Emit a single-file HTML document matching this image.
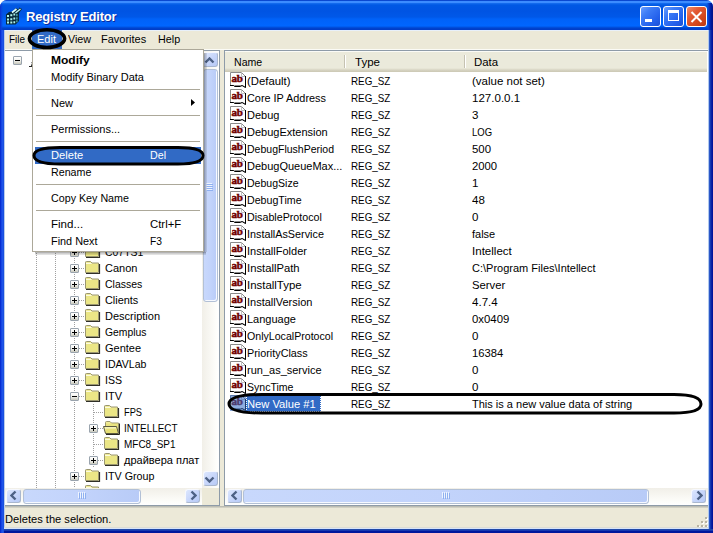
<!DOCTYPE html><html><head><meta charset="utf-8"><style>
*{margin:0;padding:0;box-sizing:border-box}
html,body{width:713px;height:533px;overflow:hidden;background:#fff}
body{position:relative;font-family:"Liberation Sans",sans-serif;font-size:11px;color:#000}
.abs{position:absolute}
#frame{position:absolute;left:0;top:0;width:713px;height:533px;background:#0a3fd6;border-radius:7px 7px 0 0;overflow:hidden}
#lb{z-index:5;position:absolute;left:0;top:30px;width:5px;height:503px;background:linear-gradient(90deg,#0428cc 0,#0a34d8 1px,#2258f0 2px,#1a50e0 3px,#1a50e0 4px,#b8cceb 4px,#b8cceb 5px)}
#rb{z-index:6;position:absolute;left:708px;top:30px;width:5px;height:499px;background:linear-gradient(90deg,#b0c8ee 0,#b0c8ee 1px,#2a58c8 1px,#2a58c8 2px,#1438b0 2px,#1438b0 3px,#0a22a2 3px,#0a22a2 4px,#00139a 4px)}
#bb{z-index:5;position:absolute;left:4px;top:527px;width:709px;height:6px;background:linear-gradient(180deg,#dcdcd4 0,#dcdcd4 1px,#d8e4f8 1px,#d8e4f8 2px,#2048a8 2px,#2048a8 3px,#1538b0 3px,#1538b0 4px,#00169c 4px)}
#title{position:absolute;left:0;top:0;width:713px;height:31px;border-radius:7px 7px 0 0;
 background:linear-gradient(180deg,#0a48d0 0,#0a48d0 1px,#3c8cff 1px,#3c8cff 3px,#1870f0 3px,#0058e4 5px,#0054e3 11px,#0058e8 17px,#0062f8 19px,#0066ff 26px,#0054e4 27px,#0046d0 28px,#003dc8 29px,#003dc8 30px,#e8f0fa 30px)}
#ttext{position:absolute;left:26px;top:7px;font-weight:bold;font-size:13px;line-height:20px;color:#fff;text-shadow:1px 1px 0 #0a2a9c;letter-spacing:-0.18px}
.tbtn{position:absolute;top:6px;width:21px;height:21px;border:1px solid #fff;border-radius:3px}
.tblue{background:linear-gradient(135deg,#6a9eff 0%,#3d7cf6 30%,#2461ec 70%,#1b50d6 100%)}
#menubar{position:absolute;left:4px;top:31px;width:705px;height:18px;background:#ece9d8}
.mi{position:absolute;top:29px;line-height:20px;height:20px}
#client{position:absolute;left:4px;top:50px;width:704px;height:478px;background:#ece9d8}
.pane{position:absolute;background:#fff;border:1px solid #8e9ba8;overflow:hidden}
.tr{position:absolute;white-space:nowrap;line-height:16px;height:16px}
.exp{position:absolute;width:9px;height:9px;border:1px solid #9aa4ae;border-radius:1px;background:linear-gradient(180deg,#fff 0,#f2f2ee 50%,#c8c8bc 100%)}
.exp:before{content:"";position:absolute;left:1px;top:3px;width:5px;height:1px;background:#000}
.exp.plus:after{content:"";position:absolute;left:3px;top:1px;width:1px;height:5px;background:#000}
.vd{position:absolute;width:1px;background:repeating-linear-gradient(180deg,#a0a0a0 0,#a0a0a0 1px,transparent 1px,transparent 2px)}
.hd{position:absolute;height:1px;background:repeating-linear-gradient(90deg,#a0a0a0 0,#a0a0a0 1px,transparent 1px,transparent 2px)}
.fold{position:absolute;width:16px;height:14px}
.row{position:absolute;left:0;height:17px;line-height:17px;white-space:nowrap}
.sbtn{position:absolute;width:15px;height:15px;border:1px solid;border-color:#f6f8fe #a9b7cf #a9b7cf #f6f8fe;border-radius:3px;background:linear-gradient(135deg,#dde7fe 0%,#cad8fb 45%,#b6c9f6 100%)}
.thumb{position:absolute;border:1px solid #b2c0d6;border-radius:3px;background:linear-gradient(90deg,#c8d8fc,#c2d3fb 50%,#b8cbf7);box-shadow:inset -1px -1px 0 #f6f9ff}
.grip{position:absolute;background:#8fb0f0;box-shadow:-1px -1px 0 #eef4fe}
.mrow{position:absolute;left:1px;width:170px;height:17px;line-height:16px;white-space:nowrap}
.msep{position:absolute;left:3px;width:164px;height:1px;background:#aca899}
</style></head><body>
<div id="frame">
<div id="title"></div>
<div id="lb"></div><div id="rb"></div><div id="bb"></div>
<div class="abs" style="left:0;top:4px;width:3px;height:26px;background:linear-gradient(90deg,#0830c8,#0a40dc 1px,rgba(10,70,230,0) 3px)"></div>
<div class="abs" style="left:707px;top:3px;width:6px;height:27px;background:linear-gradient(90deg,rgba(0,80,230,0) 0,#0a48d8 1px,#0836c0 2px,#0028b0 3px,#001ea0 4px,#00148c 5px)"></div>
<svg class="abs" style="left:0;top:0" width="26" height="28" viewBox="0 0 26 28">
<path d="M6 14.5 L9 12 L13 11.5 L16 8 L18.5 9.5 L19.5 7.5 L22 9 L19 13 L19 21 L15.5 24.5 L6 24.5 Z" fill="#062838"/>
<g fill="#b0f2ec"><path d="M7 15 h2 v2 h-2z M10.3 14.3 h2 v2 h-2z M13.4 13.6 h1.8 v2 h-1.8z M7 18.4 h2 v2 h-2z M10.3 18.2 h2 v2 h-2z M13.4 17.6 h1.8 v2 h-1.8z M7 21.6 h2 v2 h-2z M10.3 21.6 h2 v2 h-2z M13.4 21.2 h1.8 v2 h-1.8z"/>
<path d="M16.3 14 h1.2 v2.3 h-1.2z M16.3 17.2 h1.2 v2.3 h-1.2z M16.3 20.3 h1.2 v2 h-1.2z" fill="#5ab8c0"/></g>
<path d="M12 12.5 L16.5 9" stroke="#e0fffc" stroke-width="1.6"/><path d="M15.5 13 L20.5 9" stroke="#c0f4f0" stroke-width="1.4"/>
</svg>
<div id="ttext">Registry Editor</div>
<div class="tbtn tblue" style="left:640px"><div class="abs" style="left:4px;top:12px;width:7px;height:3px;background:#fff"></div></div>
<div class="tbtn tblue" style="left:663px"><div class="abs" style="left:4px;top:3px;width:11px;height:11px;border:1px solid #fff;border-top-width:3px"></div></div>
<div class="tbtn" style="left:686px;background:linear-gradient(135deg,#f08c6a 0%,#e35a35 35%,#d04418 75%,#b83a12 100%)"><svg class="abs" style="left:3px;top:4px" width="13" height="12"><path d="M1.5 1 L11.5 11 M11.5 1 L1.5 11" stroke="#fff" stroke-width="2"/></svg></div>
<div id="menubar"></div><div class="abs" style="left:4px;top:49px;width:705px;height:1px;background:#fbfbf6"></div>
<div class="abs" style="left:32px;top:30px;width:30px;height:19px;background:#316ac5"></div>
<div class="mi" style="left:9px;color:#000;transform:scaleX(0.9036);transform-origin:0 0;">File</div>
<div class="mi" style="left:37px;color:#fff;">Edit</div>
<div class="mi" style="left:68px;color:#000;transform:scaleX(0.9778);transform-origin:0 0;">View</div>
<div class="mi" style="left:101px;color:#000;">Favorites</div>
<div class="mi" style="left:158px;color:#000;transform:scaleX(0.9775);transform-origin:0 0;">Help</div>
<div id="client"></div>
<div class="pane" style="left:4px;top:50px;width:216px;height:456px">
<div class="vd" style="left:31px;top:0;height:440px"></div>
<div class="vd" style="left:50px;top:0;height:440px"></div>
<div class="vd" style="left:69px;top:139px;height:300px"></div>
<div class="vd" style="left:88px;top:353px;height:64px"></div>
<div class="exp" style="left:8px;top:5px"></div>
<svg class="abs" style="left:23px;top:10px" width="5" height="7"><path d="M1 5.5 H4.5 M3.5 5 L4.5 2.5" stroke="#222" stroke-width="1.2" fill="none"/><rect x="3" y="1" width="2" height="1" fill="#999"/></svg>
<div class="hd" style="left:74px;top:201px;width:5px"></div>
<div class="exp plus" style="left:65px;top:197px"></div>
<svg class="fold" style="left:80px;top:194px" width="16" height="14" viewBox="0 0 16 14"><path d="M1 12.5 H14.5 V3" fill="none" stroke="#303028" stroke-width="1.2"/><path d="M0.5 11.5 V1.2 Q0.5 0.5 1.5 0.5 H5.5 L7 2 H13.5 V11.5 Z" fill="#f0eb98" stroke="#9a9670"/><rect x="1" y="3" width="12" height="8" fill="#e2da5c" opacity="0.3"/><path d="M1 2.5 H6.5" stroke="#fbfbe0"/></svg>
<div class="tr" style="left:100px;top:193px;transform:scaleX(0.9503);transform-origin:0 0;">C07TS1</div>
<div class="hd" style="left:74px;top:217px;width:5px"></div>
<div class="exp plus" style="left:65px;top:213px"></div>
<svg class="fold" style="left:80px;top:210px" width="16" height="14" viewBox="0 0 16 14"><path d="M1 12.5 H14.5 V3" fill="none" stroke="#303028" stroke-width="1.2"/><path d="M0.5 11.5 V1.2 Q0.5 0.5 1.5 0.5 H5.5 L7 2 H13.5 V11.5 Z" fill="#f0eb98" stroke="#9a9670"/><rect x="1" y="3" width="12" height="8" fill="#e2da5c" opacity="0.3"/><path d="M1 2.5 H6.5" stroke="#fbfbe0"/></svg>
<div class="tr" style="left:100px;top:209px;">Canon</div>
<div class="hd" style="left:74px;top:233px;width:5px"></div>
<div class="exp plus" style="left:65px;top:229px"></div>
<svg class="fold" style="left:80px;top:226px" width="16" height="14" viewBox="0 0 16 14"><path d="M1 12.5 H14.5 V3" fill="none" stroke="#303028" stroke-width="1.2"/><path d="M0.5 11.5 V1.2 Q0.5 0.5 1.5 0.5 H5.5 L7 2 H13.5 V11.5 Z" fill="#f0eb98" stroke="#9a9670"/><rect x="1" y="3" width="12" height="8" fill="#e2da5c" opacity="0.3"/><path d="M1 2.5 H6.5" stroke="#fbfbe0"/></svg>
<div class="tr" style="left:100px;top:225px;transform:scaleX(0.9544);transform-origin:0 0;">Classes</div>
<div class="hd" style="left:74px;top:249px;width:5px"></div>
<div class="exp plus" style="left:65px;top:245px"></div>
<svg class="fold" style="left:80px;top:242px" width="16" height="14" viewBox="0 0 16 14"><path d="M1 12.5 H14.5 V3" fill="none" stroke="#303028" stroke-width="1.2"/><path d="M0.5 11.5 V1.2 Q0.5 0.5 1.5 0.5 H5.5 L7 2 H13.5 V11.5 Z" fill="#f0eb98" stroke="#9a9670"/><rect x="1" y="3" width="12" height="8" fill="#e2da5c" opacity="0.3"/><path d="M1 2.5 H6.5" stroke="#fbfbe0"/></svg>
<div class="tr" style="left:100px;top:241px;transform:scaleX(0.9897);transform-origin:0 0;">Clients</div>
<div class="hd" style="left:74px;top:265px;width:5px"></div>
<div class="exp plus" style="left:65px;top:261px"></div>
<svg class="fold" style="left:80px;top:258px" width="16" height="14" viewBox="0 0 16 14"><path d="M1 12.5 H14.5 V3" fill="none" stroke="#303028" stroke-width="1.2"/><path d="M0.5 11.5 V1.2 Q0.5 0.5 1.5 0.5 H5.5 L7 2 H13.5 V11.5 Z" fill="#f0eb98" stroke="#9a9670"/><rect x="1" y="3" width="12" height="8" fill="#e2da5c" opacity="0.3"/><path d="M1 2.5 H6.5" stroke="#fbfbe0"/></svg>
<div class="tr" style="left:100px;top:257px;">Description</div>
<div class="hd" style="left:74px;top:281px;width:5px"></div>
<div class="exp plus" style="left:65px;top:277px"></div>
<svg class="fold" style="left:80px;top:274px" width="16" height="14" viewBox="0 0 16 14"><path d="M1 12.5 H14.5 V3" fill="none" stroke="#303028" stroke-width="1.2"/><path d="M0.5 11.5 V1.2 Q0.5 0.5 1.5 0.5 H5.5 L7 2 H13.5 V11.5 Z" fill="#f0eb98" stroke="#9a9670"/><rect x="1" y="3" width="12" height="8" fill="#e2da5c" opacity="0.3"/><path d="M1 2.5 H6.5" stroke="#fbfbe0"/></svg>
<div class="tr" style="left:100px;top:273px;transform:scaleX(0.9402);transform-origin:0 0;">Gemplus</div>
<div class="hd" style="left:74px;top:297px;width:5px"></div>
<div class="exp plus" style="left:65px;top:293px"></div>
<svg class="fold" style="left:80px;top:290px" width="16" height="14" viewBox="0 0 16 14"><path d="M1 12.5 H14.5 V3" fill="none" stroke="#303028" stroke-width="1.2"/><path d="M0.5 11.5 V1.2 Q0.5 0.5 1.5 0.5 H5.5 L7 2 H13.5 V11.5 Z" fill="#f0eb98" stroke="#9a9670"/><rect x="1" y="3" width="12" height="8" fill="#e2da5c" opacity="0.3"/><path d="M1 2.5 H6.5" stroke="#fbfbe0"/></svg>
<div class="tr" style="left:100px;top:289px;">Gentee</div>
<div class="hd" style="left:74px;top:313px;width:5px"></div>
<div class="exp plus" style="left:65px;top:309px"></div>
<svg class="fold" style="left:80px;top:306px" width="16" height="14" viewBox="0 0 16 14"><path d="M1 12.5 H14.5 V3" fill="none" stroke="#303028" stroke-width="1.2"/><path d="M0.5 11.5 V1.2 Q0.5 0.5 1.5 0.5 H5.5 L7 2 H13.5 V11.5 Z" fill="#f0eb98" stroke="#9a9670"/><rect x="1" y="3" width="12" height="8" fill="#e2da5c" opacity="0.3"/><path d="M1 2.5 H6.5" stroke="#fbfbe0"/></svg>
<div class="tr" style="left:100px;top:305px;transform:scaleX(0.9579);transform-origin:0 0;">IDAVLab</div>
<div class="hd" style="left:74px;top:329px;width:5px"></div>
<div class="exp plus" style="left:65px;top:325px"></div>
<svg class="fold" style="left:80px;top:322px" width="16" height="14" viewBox="0 0 16 14"><path d="M1 12.5 H14.5 V3" fill="none" stroke="#303028" stroke-width="1.2"/><path d="M0.5 11.5 V1.2 Q0.5 0.5 1.5 0.5 H5.5 L7 2 H13.5 V11.5 Z" fill="#f0eb98" stroke="#9a9670"/><rect x="1" y="3" width="12" height="8" fill="#e2da5c" opacity="0.3"/><path d="M1 2.5 H6.5" stroke="#fbfbe0"/></svg>
<div class="tr" style="left:100px;top:321px;transform:scaleX(0.9608);transform-origin:0 0;">ISS</div>
<div class="hd" style="left:74px;top:345px;width:5px"></div>
<div class="exp" style="left:65px;top:341px"></div>
<svg class="fold" style="left:80px;top:338px" width="16" height="14" viewBox="0 0 16 14"><path d="M1 12.5 H14.5 V3" fill="none" stroke="#303028" stroke-width="1.2"/><path d="M0.5 11.5 V1.2 Q0.5 0.5 1.5 0.5 H5.5 L7 2 H13.5 V11.5 Z" fill="#f0eb98" stroke="#9a9670"/><rect x="1" y="3" width="12" height="8" fill="#e2da5c" opacity="0.3"/><path d="M1 2.5 H6.5" stroke="#fbfbe0"/></svg>
<div class="tr" style="left:100px;top:337px;">ITV</div>
<div class="hd" style="left:89px;top:361px;width:9px"></div>
<svg class="fold" style="left:99px;top:354px" width="16" height="14" viewBox="0 0 16 14"><path d="M1 12.5 H14.5 V3" fill="none" stroke="#303028" stroke-width="1.2"/><path d="M0.5 11.5 V1.2 Q0.5 0.5 1.5 0.5 H5.5 L7 2 H13.5 V11.5 Z" fill="#f0eb98" stroke="#9a9670"/><rect x="1" y="3" width="12" height="8" fill="#e2da5c" opacity="0.3"/><path d="M1 2.5 H6.5" stroke="#fbfbe0"/></svg>
<div class="tr" style="left:119px;top:353px;transform:scaleX(0.8434);transform-origin:0 0;">FPS</div>
<div class="hd" style="left:93px;top:377px;width:5px"></div>
<div class="exp plus" style="left:84px;top:373px"></div>
<svg class="abs" style="left:98px;top:370px" width="17" height="15" viewBox="0 0 17 15"><path d="M2.5 12 V1.5 Q2.5 0.5 3.5 0.5 H7 L8.5 2 H15.5 V12" fill="#f0eb98" stroke="#9a9670"/><rect x="3" y="2.5" width="12" height="4" fill="#e2da5c" opacity="0.4"/><path d="M16.5 2.5 V13.5 M3 13.5 H16.5" stroke="#262620"/><path d="M0.5 5.5 H13.5 L15.5 12.5 H2.5 Z" fill="#ece68c" stroke="#5c5a40"/><path d="M2 7 H13" stroke="#fbfbe0"/><rect x="3" y="7.5" width="11" height="4.5" fill="#e2da5c" opacity="0.45"/></svg>
<div class="tr" style="left:119px;top:369px;transform:scaleX(0.9036);transform-origin:0 0;">INTELLECT</div>
<div class="hd" style="left:89px;top:393px;width:9px"></div>
<svg class="fold" style="left:99px;top:386px" width="16" height="14" viewBox="0 0 16 14"><path d="M1 12.5 H14.5 V3" fill="none" stroke="#303028" stroke-width="1.2"/><path d="M0.5 11.5 V1.2 Q0.5 0.5 1.5 0.5 H5.5 L7 2 H13.5 V11.5 Z" fill="#f0eb98" stroke="#9a9670"/><rect x="1" y="3" width="12" height="8" fill="#e2da5c" opacity="0.3"/><path d="M1 2.5 H6.5" stroke="#fbfbe0"/></svg>
<div class="tr" style="left:119px;top:385px;transform:scaleX(0.9066);transform-origin:0 0;">MFC8_SP1</div>
<div class="hd" style="left:93px;top:409px;width:5px"></div>
<div class="exp plus" style="left:84px;top:405px"></div>
<svg class="fold" style="left:99px;top:402px" width="16" height="14" viewBox="0 0 16 14"><path d="M1 12.5 H14.5 V3" fill="none" stroke="#303028" stroke-width="1.2"/><path d="M0.5 11.5 V1.2 Q0.5 0.5 1.5 0.5 H5.5 L7 2 H13.5 V11.5 Z" fill="#f0eb98" stroke="#9a9670"/><rect x="1" y="3" width="12" height="8" fill="#e2da5c" opacity="0.3"/><path d="M1 2.5 H6.5" stroke="#fbfbe0"/></svg>
<div class="tr" style="left:119px;top:401px;">драйвера плат</div>
<div class="hd" style="left:74px;top:425px;width:5px"></div>
<div class="exp plus" style="left:65px;top:421px"></div>
<svg class="fold" style="left:80px;top:418px" width="16" height="14" viewBox="0 0 16 14"><path d="M1 12.5 H14.5 V3" fill="none" stroke="#303028" stroke-width="1.2"/><path d="M0.5 11.5 V1.2 Q0.5 0.5 1.5 0.5 H5.5 L7 2 H13.5 V11.5 Z" fill="#f0eb98" stroke="#9a9670"/><rect x="1" y="3" width="12" height="8" fill="#e2da5c" opacity="0.3"/><path d="M1 2.5 H6.5" stroke="#fbfbe0"/></svg>
<div class="tr" style="left:100px;top:417px;transform:scaleX(0.9758);transform-origin:0 0;">ITV Group</div>
<div class="hd" style="left:74px;top:441px;width:5px"></div>
<div class="exp plus" style="left:65px;top:437px"></div>
<svg class="fold" style="left:80px;top:434px" width="16" height="14" viewBox="0 0 16 14"><path d="M1 12.5 H14.5 V3" fill="none" stroke="#303028" stroke-width="1.2"/><path d="M0.5 11.5 V1.2 Q0.5 0.5 1.5 0.5 H5.5 L7 2 H13.5 V11.5 Z" fill="#f0eb98" stroke="#9a9670"/><rect x="1" y="3" width="12" height="8" fill="#e2da5c" opacity="0.3"/><path d="M1 2.5 H6.5" stroke="#fbfbe0"/></svg>
<div class="abs" style="left:197px;top:0;width:17px;height:437px;background:linear-gradient(90deg,#f1efe8,#fdfdfa 80%,#fff)"></div>
<div class="sbtn" style="left:198px;top:1px"><svg class="abs" style="left:0px;top:4px" width="11" height="7"><path d="M1.5 5.5 L5.5 1.5 L9.5 5.5" fill="none" stroke="#4d6185" stroke-width="2.4"/></svg></div>
<div class="thumb" style="left:198px;top:18px;width:15px;height:233px"></div>
<div class="grip" style="left:202px;top:133px;width:6px;height:1px"></div><div class="grip" style="left:202px;top:135px;width:6px;height:1px"></div><div class="grip" style="left:202px;top:137px;width:6px;height:1px"></div><div class="grip" style="left:202px;top:139px;width:6px;height:1px"></div>
<div class="sbtn" style="left:198px;top:420px"><svg class="abs" style="left:0px;top:4px" width="11" height="7"><path d="M1.5 1.5 L5.5 5.5 L9.5 1.5" fill="none" stroke="#4d6185" stroke-width="2.4"/></svg></div>
<div class="abs" style="left:0;top:437px;width:197px;height:17px;background:linear-gradient(180deg,#f1efe8,#fdfdfa 80%,#fff)"></div>
<div class="sbtn" style="left:1px;top:438px;height:14px"><svg class="abs" style="left:3px;top:0px" width="7" height="11"><path d="M5.5 1.5 L1.5 5.5 L5.5 9.5" fill="none" stroke="#4d6185" stroke-width="2.4"/></svg></div>
<div class="thumb" style="left:18px;top:438px;width:118px;height:15px"></div>
<div class="grip" style="left:74px;top:442px;width:1px;height:6px"></div><div class="grip" style="left:76px;top:442px;width:1px;height:6px"></div><div class="grip" style="left:78px;top:442px;width:1px;height:6px"></div><div class="grip" style="left:80px;top:442px;width:1px;height:6px"></div>
<div class="sbtn" style="left:180px;top:438px;height:14px"><svg class="abs" style="left:4px;top:0px" width="7" height="11"><path d="M1.5 1.5 L5.5 5.5 L1.5 9.5" fill="none" stroke="#4d6185" stroke-width="2.4"/></svg></div>
<div class="abs" style="left:197px;top:437px;width:17px;height:17px;background:#ece9d8"></div>
</div>
<div class="pane" style="left:224px;top:50px;width:485px;height:456px">
<div class="abs" style="left:0;top:0;width:482px;height:21px;background:linear-gradient(180deg,#fbfbf6 0,#fbfbf6 1px,#ebeadb 1px,#ebeadb 17px,#e2e0cf 18px,#d6d3c2 19px,#cbc8b4 21px)"></div>
<div class="abs" style="left:119px;top:4px;width:1px;height:13px;background:#c5c2b2"></div><div class="abs" style="left:120px;top:4px;width:1px;height:13px;background:#fff"></div>
<div class="abs" style="left:239px;top:4px;width:1px;height:13px;background:#c5c2b2"></div><div class="abs" style="left:240px;top:4px;width:1px;height:13px;background:#fff"></div>
<div class="row" style="left:9px;top:3px;line-height:17px;transform:scaleX(0.9612);transform-origin:0 0;">Name</div>
<div class="row" style="left:130px;top:3px;line-height:17px;transform:scaleX(1.0500);transform-origin:0 0;">Type</div>
<div class="row" style="left:249px;top:3px;line-height:17px;transform:scaleX(1.0385);transform-origin:0 0;">Data</div>
<svg class="abs" style="left:5px;top:21px" width="16" height="16" viewBox="0 0 16 16"><path d="M0.5 13.5 V0.5 H11.5 L15.5 4.5 V15.5 L12.5 13.5 H4.5 L3 13.5 H0.5" fill="#fff" stroke="#8a8a8a"/><path d="M11.5 0.5 V4.5 H15.5" fill="none" stroke="#c0c0c0"/><path d="M0 13.5 H3.5 L4.5 14.5 H10.5 L12 13.5 L15.5 15.5 V4" fill="none" stroke="#000"/><text x="1.4" y="10" font-family="Liberation Serif" font-weight="bold" font-size="11" letter-spacing="-0.2" fill="#700000" stroke="#700000" stroke-width="0.5">ab</text></svg>
<div class="row" style="left:22px;top:22px;transform:scaleX(1.0295);transform-origin:0 0;">(Default)</div>
<div class="row" style="left:126px;top:22px;transform:scaleX(0.8945);transform-origin:0 0;">REG_SZ</div>
<div class="row" style="left:247px;top:22px;transform:scaleX(1.0454);transform-origin:0 0;">(value not set)</div>
<svg class="abs" style="left:5px;top:38px" width="16" height="16" viewBox="0 0 16 16"><path d="M0.5 13.5 V0.5 H11.5 L15.5 4.5 V15.5 L12.5 13.5 H4.5 L3 13.5 H0.5" fill="#fff" stroke="#8a8a8a"/><path d="M11.5 0.5 V4.5 H15.5" fill="none" stroke="#c0c0c0"/><path d="M0 13.5 H3.5 L4.5 14.5 H10.5 L12 13.5 L15.5 15.5 V4" fill="none" stroke="#000"/><text x="1.4" y="10" font-family="Liberation Serif" font-weight="bold" font-size="11" letter-spacing="-0.2" fill="#700000" stroke="#700000" stroke-width="0.5">ab</text></svg>
<div class="row" style="left:22px;top:39px;transform:scaleX(0.9881);transform-origin:0 0;">Core IP Address</div>
<div class="row" style="left:126px;top:39px;transform:scaleX(0.8945);transform-origin:0 0;">REG_SZ</div>
<div class="row" style="left:247px;top:39px;transform:scaleX(1.0500);transform-origin:0 0;">127.0.0.1</div>
<svg class="abs" style="left:5px;top:55px" width="16" height="16" viewBox="0 0 16 16"><path d="M0.5 13.5 V0.5 H11.5 L15.5 4.5 V15.5 L12.5 13.5 H4.5 L3 13.5 H0.5" fill="#fff" stroke="#8a8a8a"/><path d="M11.5 0.5 V4.5 H15.5" fill="none" stroke="#c0c0c0"/><path d="M0 13.5 H3.5 L4.5 14.5 H10.5 L12 13.5 L15.5 15.5 V4" fill="none" stroke="#000"/><text x="1.4" y="10" font-family="Liberation Serif" font-weight="bold" font-size="11" letter-spacing="-0.2" fill="#700000" stroke="#700000" stroke-width="0.5">ab</text></svg>
<div class="row" style="left:22px;top:56px;">Debug</div>
<div class="row" style="left:126px;top:56px;transform:scaleX(0.8945);transform-origin:0 0;">REG_SZ</div>
<div class="row" style="left:247px;top:56px;transform:scaleX(1.0500);transform-origin:0 0;">3</div>
<svg class="abs" style="left:5px;top:72px" width="16" height="16" viewBox="0 0 16 16"><path d="M0.5 13.5 V0.5 H11.5 L15.5 4.5 V15.5 L12.5 13.5 H4.5 L3 13.5 H0.5" fill="#fff" stroke="#8a8a8a"/><path d="M11.5 0.5 V4.5 H15.5" fill="none" stroke="#c0c0c0"/><path d="M0 13.5 H3.5 L4.5 14.5 H10.5 L12 13.5 L15.5 15.5 V4" fill="none" stroke="#000"/><text x="1.4" y="10" font-family="Liberation Serif" font-weight="bold" font-size="11" letter-spacing="-0.2" fill="#700000" stroke="#700000" stroke-width="0.5">ab</text></svg>
<div class="row" style="left:22px;top:73px;">DebugExtension</div>
<div class="row" style="left:126px;top:73px;transform:scaleX(0.8945);transform-origin:0 0;">REG_SZ</div>
<div class="row" style="left:247px;top:73px;transform:scaleX(0.8645);transform-origin:0 0;">LOG</div>
<svg class="abs" style="left:5px;top:89px" width="16" height="16" viewBox="0 0 16 16"><path d="M0.5 13.5 V0.5 H11.5 L15.5 4.5 V15.5 L12.5 13.5 H4.5 L3 13.5 H0.5" fill="#fff" stroke="#8a8a8a"/><path d="M11.5 0.5 V4.5 H15.5" fill="none" stroke="#c0c0c0"/><path d="M0 13.5 H3.5 L4.5 14.5 H10.5 L12 13.5 L15.5 15.5 V4" fill="none" stroke="#000"/><text x="1.4" y="10" font-family="Liberation Serif" font-weight="bold" font-size="11" letter-spacing="-0.2" fill="#700000" stroke="#700000" stroke-width="0.5">ab</text></svg>
<div class="row" style="left:22px;top:90px;transform:scaleX(0.9556);transform-origin:0 0;">DebugFlushPeriod</div>
<div class="row" style="left:126px;top:90px;transform:scaleX(0.8945);transform-origin:0 0;">REG_SZ</div>
<div class="row" style="left:247px;top:90px;transform:scaleX(1.0387);transform-origin:0 0;">500</div>
<svg class="abs" style="left:5px;top:106px" width="16" height="16" viewBox="0 0 16 16"><path d="M0.5 13.5 V0.5 H11.5 L15.5 4.5 V15.5 L12.5 13.5 H4.5 L3 13.5 H0.5" fill="#fff" stroke="#8a8a8a"/><path d="M11.5 0.5 V4.5 H15.5" fill="none" stroke="#c0c0c0"/><path d="M0 13.5 H3.5 L4.5 14.5 H10.5 L12 13.5 L15.5 15.5 V4" fill="none" stroke="#000"/><text x="1.4" y="10" font-family="Liberation Serif" font-weight="bold" font-size="11" letter-spacing="-0.2" fill="#700000" stroke="#700000" stroke-width="0.5">ab</text></svg>
<div class="row" style="left:22px;top:107px;">DebugQueueMax...</div>
<div class="row" style="left:126px;top:107px;transform:scaleX(0.8945);transform-origin:0 0;">REG_SZ</div>
<div class="row" style="left:247px;top:107px;transform:scaleX(1.0276);transform-origin:0 0;">2000</div>
<svg class="abs" style="left:5px;top:123px" width="16" height="16" viewBox="0 0 16 16"><path d="M0.5 13.5 V0.5 H11.5 L15.5 4.5 V15.5 L12.5 13.5 H4.5 L3 13.5 H0.5" fill="#fff" stroke="#8a8a8a"/><path d="M11.5 0.5 V4.5 H15.5" fill="none" stroke="#c0c0c0"/><path d="M0 13.5 H3.5 L4.5 14.5 H10.5 L12 13.5 L15.5 15.5 V4" fill="none" stroke="#000"/><text x="1.4" y="10" font-family="Liberation Serif" font-weight="bold" font-size="11" letter-spacing="-0.2" fill="#700000" stroke="#700000" stroke-width="0.5">ab</text></svg>
<div class="row" style="left:22px;top:124px;transform:scaleX(0.9577);transform-origin:0 0;">DebugSize</div>
<div class="row" style="left:126px;top:124px;transform:scaleX(0.8945);transform-origin:0 0;">REG_SZ</div>
<div class="row" style="left:247px;top:124px;transform:scaleX(1.0500);transform-origin:0 0;">1</div>
<svg class="abs" style="left:5px;top:140px" width="16" height="16" viewBox="0 0 16 16"><path d="M0.5 13.5 V0.5 H11.5 L15.5 4.5 V15.5 L12.5 13.5 H4.5 L3 13.5 H0.5" fill="#fff" stroke="#8a8a8a"/><path d="M11.5 0.5 V4.5 H15.5" fill="none" stroke="#c0c0c0"/><path d="M0 13.5 H3.5 L4.5 14.5 H10.5 L12 13.5 L15.5 15.5 V4" fill="none" stroke="#000"/><text x="1.4" y="10" font-family="Liberation Serif" font-weight="bold" font-size="11" letter-spacing="-0.2" fill="#700000" stroke="#700000" stroke-width="0.5">ab</text></svg>
<div class="row" style="left:22px;top:141px;transform:scaleX(0.9671);transform-origin:0 0;">DebugTime</div>
<div class="row" style="left:126px;top:141px;transform:scaleX(0.8945);transform-origin:0 0;">REG_SZ</div>
<div class="row" style="left:247px;top:141px;transform:scaleX(1.0500);transform-origin:0 0;">48</div>
<svg class="abs" style="left:5px;top:157px" width="16" height="16" viewBox="0 0 16 16"><path d="M0.5 13.5 V0.5 H11.5 L15.5 4.5 V15.5 L12.5 13.5 H4.5 L3 13.5 H0.5" fill="#fff" stroke="#8a8a8a"/><path d="M11.5 0.5 V4.5 H15.5" fill="none" stroke="#c0c0c0"/><path d="M0 13.5 H3.5 L4.5 14.5 H10.5 L12 13.5 L15.5 15.5 V4" fill="none" stroke="#000"/><text x="1.4" y="10" font-family="Liberation Serif" font-weight="bold" font-size="11" letter-spacing="-0.2" fill="#700000" stroke="#700000" stroke-width="0.5">ab</text></svg>
<div class="row" style="left:22px;top:158px;transform:scaleX(0.9721);transform-origin:0 0;">DisableProtocol</div>
<div class="row" style="left:126px;top:158px;transform:scaleX(0.8945);transform-origin:0 0;">REG_SZ</div>
<div class="row" style="left:247px;top:158px;transform:scaleX(1.0500);transform-origin:0 0;">0</div>
<svg class="abs" style="left:5px;top:174px" width="16" height="16" viewBox="0 0 16 16"><path d="M0.5 13.5 V0.5 H11.5 L15.5 4.5 V15.5 L12.5 13.5 H4.5 L3 13.5 H0.5" fill="#fff" stroke="#8a8a8a"/><path d="M11.5 0.5 V4.5 H15.5" fill="none" stroke="#c0c0c0"/><path d="M0 13.5 H3.5 L4.5 14.5 H10.5 L12 13.5 L15.5 15.5 V4" fill="none" stroke="#000"/><text x="1.4" y="10" font-family="Liberation Serif" font-weight="bold" font-size="11" letter-spacing="-0.2" fill="#700000" stroke="#700000" stroke-width="0.5">ab</text></svg>
<div class="row" style="left:22px;top:175px;transform:scaleX(0.9829);transform-origin:0 0;">InstallAsService</div>
<div class="row" style="left:126px;top:175px;transform:scaleX(0.8945);transform-origin:0 0;">REG_SZ</div>
<div class="row" style="left:247px;top:175px;">false</div>
<svg class="abs" style="left:5px;top:191px" width="16" height="16" viewBox="0 0 16 16"><path d="M0.5 13.5 V0.5 H11.5 L15.5 4.5 V15.5 L12.5 13.5 H4.5 L3 13.5 H0.5" fill="#fff" stroke="#8a8a8a"/><path d="M11.5 0.5 V4.5 H15.5" fill="none" stroke="#c0c0c0"/><path d="M0 13.5 H3.5 L4.5 14.5 H10.5 L12 13.5 L15.5 15.5 V4" fill="none" stroke="#000"/><text x="1.4" y="10" font-family="Liberation Serif" font-weight="bold" font-size="11" letter-spacing="-0.2" fill="#700000" stroke="#700000" stroke-width="0.5">ab</text></svg>
<div class="row" style="left:22px;top:192px;">InstallFolder</div>
<div class="row" style="left:126px;top:192px;transform:scaleX(0.8945);transform-origin:0 0;">REG_SZ</div>
<div class="row" style="left:247px;top:192px;transform:scaleX(1.0500);transform-origin:0 0;">Intellect</div>
<svg class="abs" style="left:5px;top:208px" width="16" height="16" viewBox="0 0 16 16"><path d="M0.5 13.5 V0.5 H11.5 L15.5 4.5 V15.5 L12.5 13.5 H4.5 L3 13.5 H0.5" fill="#fff" stroke="#8a8a8a"/><path d="M11.5 0.5 V4.5 H15.5" fill="none" stroke="#c0c0c0"/><path d="M0 13.5 H3.5 L4.5 14.5 H10.5 L12 13.5 L15.5 15.5 V4" fill="none" stroke="#000"/><text x="1.4" y="10" font-family="Liberation Serif" font-weight="bold" font-size="11" letter-spacing="-0.2" fill="#700000" stroke="#700000" stroke-width="0.5">ab</text></svg>
<div class="row" style="left:22px;top:209px;transform:scaleX(1.0232);transform-origin:0 0;">InstallPath</div>
<div class="row" style="left:126px;top:209px;transform:scaleX(0.8945);transform-origin:0 0;">REG_SZ</div>
<div class="row" style="left:247px;top:209px;">C:\Program Files\Intellect</div>
<svg class="abs" style="left:5px;top:225px" width="16" height="16" viewBox="0 0 16 16"><path d="M0.5 13.5 V0.5 H11.5 L15.5 4.5 V15.5 L12.5 13.5 H4.5 L3 13.5 H0.5" fill="#fff" stroke="#8a8a8a"/><path d="M11.5 0.5 V4.5 H15.5" fill="none" stroke="#c0c0c0"/><path d="M0 13.5 H3.5 L4.5 14.5 H10.5 L12 13.5 L15.5 15.5 V4" fill="none" stroke="#000"/><text x="1.4" y="10" font-family="Liberation Serif" font-weight="bold" font-size="11" letter-spacing="-0.2" fill="#700000" stroke="#700000" stroke-width="0.5">ab</text></svg>
<div class="row" style="left:22px;top:226px;transform:scaleX(1.0381);transform-origin:0 0;">InstallType</div>
<div class="row" style="left:126px;top:226px;transform:scaleX(0.8945);transform-origin:0 0;">REG_SZ</div>
<div class="row" style="left:247px;top:226px;transform:scaleX(1.0270);transform-origin:0 0;">Server</div>
<svg class="abs" style="left:5px;top:242px" width="16" height="16" viewBox="0 0 16 16"><path d="M0.5 13.5 V0.5 H11.5 L15.5 4.5 V15.5 L12.5 13.5 H4.5 L3 13.5 H0.5" fill="#fff" stroke="#8a8a8a"/><path d="M11.5 0.5 V4.5 H15.5" fill="none" stroke="#c0c0c0"/><path d="M0 13.5 H3.5 L4.5 14.5 H10.5 L12 13.5 L15.5 15.5 V4" fill="none" stroke="#000"/><text x="1.4" y="10" font-family="Liberation Serif" font-weight="bold" font-size="11" letter-spacing="-0.2" fill="#700000" stroke="#700000" stroke-width="0.5">ab</text></svg>
<div class="row" style="left:22px;top:243px;">InstallVersion</div>
<div class="row" style="left:126px;top:243px;transform:scaleX(0.8945);transform-origin:0 0;">REG_SZ</div>
<div class="row" style="left:247px;top:243px;transform:scaleX(1.0500);transform-origin:0 0;">4.7.4</div>
<svg class="abs" style="left:5px;top:259px" width="16" height="16" viewBox="0 0 16 16"><path d="M0.5 13.5 V0.5 H11.5 L15.5 4.5 V15.5 L12.5 13.5 H4.5 L3 13.5 H0.5" fill="#fff" stroke="#8a8a8a"/><path d="M11.5 0.5 V4.5 H15.5" fill="none" stroke="#c0c0c0"/><path d="M0 13.5 H3.5 L4.5 14.5 H10.5 L12 13.5 L15.5 15.5 V4" fill="none" stroke="#000"/><text x="1.4" y="10" font-family="Liberation Serif" font-weight="bold" font-size="11" letter-spacing="-0.2" fill="#700000" stroke="#700000" stroke-width="0.5">ab</text></svg>
<div class="row" style="left:22px;top:260px;">Language</div>
<div class="row" style="left:126px;top:260px;transform:scaleX(0.8945);transform-origin:0 0;">REG_SZ</div>
<div class="row" style="left:247px;top:260px;transform:scaleX(1.0345);transform-origin:0 0;">0x0409</div>
<svg class="abs" style="left:5px;top:276px" width="16" height="16" viewBox="0 0 16 16"><path d="M0.5 13.5 V0.5 H11.5 L15.5 4.5 V15.5 L12.5 13.5 H4.5 L3 13.5 H0.5" fill="#fff" stroke="#8a8a8a"/><path d="M11.5 0.5 V4.5 H15.5" fill="none" stroke="#c0c0c0"/><path d="M0 13.5 H3.5 L4.5 14.5 H10.5 L12 13.5 L15.5 15.5 V4" fill="none" stroke="#000"/><text x="1.4" y="10" font-family="Liberation Serif" font-weight="bold" font-size="11" letter-spacing="-0.2" fill="#700000" stroke="#700000" stroke-width="0.5">ab</text></svg>
<div class="row" style="left:22px;top:277px;transform:scaleX(0.9639);transform-origin:0 0;">OnlyLocalProtocol</div>
<div class="row" style="left:126px;top:277px;transform:scaleX(0.8945);transform-origin:0 0;">REG_SZ</div>
<div class="row" style="left:247px;top:277px;transform:scaleX(1.0500);transform-origin:0 0;">0</div>
<svg class="abs" style="left:5px;top:293px" width="16" height="16" viewBox="0 0 16 16"><path d="M0.5 13.5 V0.5 H11.5 L15.5 4.5 V15.5 L12.5 13.5 H4.5 L3 13.5 H0.5" fill="#fff" stroke="#8a8a8a"/><path d="M11.5 0.5 V4.5 H15.5" fill="none" stroke="#c0c0c0"/><path d="M0 13.5 H3.5 L4.5 14.5 H10.5 L12 13.5 L15.5 15.5 V4" fill="none" stroke="#000"/><text x="1.4" y="10" font-family="Liberation Serif" font-weight="bold" font-size="11" letter-spacing="-0.2" fill="#700000" stroke="#700000" stroke-width="0.5">ab</text></svg>
<div class="row" style="left:22px;top:294px;transform:scaleX(0.9830);transform-origin:0 0;">PriorityClass</div>
<div class="row" style="left:126px;top:294px;transform:scaleX(0.8945);transform-origin:0 0;">REG_SZ</div>
<div class="row" style="left:247px;top:294px;transform:scaleX(1.0215);transform-origin:0 0;">16384</div>
<svg class="abs" style="left:5px;top:310px" width="16" height="16" viewBox="0 0 16 16"><path d="M0.5 13.5 V0.5 H11.5 L15.5 4.5 V15.5 L12.5 13.5 H4.5 L3 13.5 H0.5" fill="#fff" stroke="#8a8a8a"/><path d="M11.5 0.5 V4.5 H15.5" fill="none" stroke="#c0c0c0"/><path d="M0 13.5 H3.5 L4.5 14.5 H10.5 L12 13.5 L15.5 15.5 V4" fill="none" stroke="#000"/><text x="1.4" y="10" font-family="Liberation Serif" font-weight="bold" font-size="11" letter-spacing="-0.2" fill="#700000" stroke="#700000" stroke-width="0.5">ab</text></svg>
<div class="row" style="left:22px;top:311px;">run_as_service</div>
<div class="row" style="left:126px;top:311px;transform:scaleX(0.8945);transform-origin:0 0;">REG_SZ</div>
<div class="row" style="left:247px;top:311px;transform:scaleX(1.0500);transform-origin:0 0;">0</div>
<svg class="abs" style="left:5px;top:327px" width="16" height="16" viewBox="0 0 16 16"><path d="M0.5 13.5 V0.5 H11.5 L15.5 4.5 V15.5 L12.5 13.5 H4.5 L3 13.5 H0.5" fill="#fff" stroke="#8a8a8a"/><path d="M11.5 0.5 V4.5 H15.5" fill="none" stroke="#c0c0c0"/><path d="M0 13.5 H3.5 L4.5 14.5 H10.5 L12 13.5 L15.5 15.5 V4" fill="none" stroke="#000"/><text x="1.4" y="10" font-family="Liberation Serif" font-weight="bold" font-size="11" letter-spacing="-0.2" fill="#700000" stroke="#700000" stroke-width="0.5">ab</text></svg>
<div class="row" style="left:22px;top:328px;transform:scaleX(0.9582);transform-origin:0 0;">SyncTime</div>
<div class="row" style="left:126px;top:328px;transform:scaleX(0.8945);transform-origin:0 0;">REG_SZ</div>
<div class="row" style="left:247px;top:328px;transform:scaleX(1.0500);transform-origin:0 0;">0</div>
<svg class="abs" style="left:5px;top:344px" width="16" height="16" viewBox="0 0 16 16"><path d="M0.5 13.5 V0.5 H11.5 L15.5 4.5 V15.5 L12.5 13.5 H4.5 L3 13.5 H0.5" fill="#fff" stroke="#8a8a8a"/><path d="M11.5 0.5 V4.5 H15.5" fill="none" stroke="#c0c0c0"/><path d="M0 13.5 H3.5 L4.5 14.5 H10.5 L12 13.5 L15.5 15.5 V4" fill="none" stroke="#000"/><text x="1.4" y="10" font-family="Liberation Serif" font-weight="bold" font-size="11" letter-spacing="-0.2" fill="#700000" stroke="#700000" stroke-width="0.5">ab</text><rect x="0" y="0" width="16" height="16" fill="#316ac5" opacity="0.55"/></svg>
<div class="abs" style="left:21px;top:344px;width:75px;height:17px;background:#316ac5;outline:1px dotted #fff;outline-offset:-1px"></div>
<div class="row" style="left:22px;top:345px;color:#fff;transform:scaleX(1.0167);transform-origin:0 0;">New Value #1</div>
<div class="row" style="left:126px;top:345px;transform:scaleX(0.8945);transform-origin:0 0;">REG_SZ</div>
<div class="row" style="left:247px;top:345px;">This is a new value data of string</div>
<div class="abs" style="left:0;top:437px;width:483px;height:17px;background:linear-gradient(180deg,#f1efe8,#fdfdfa 80%,#fff)"></div>
<div class="sbtn" style="left:2px;top:438px;height:14px"><svg class="abs" style="left:3px;top:0px" width="7" height="11"><path d="M5.5 1.5 L1.5 5.5 L5.5 9.5" fill="none" stroke="#4d6185" stroke-width="2.4"/></svg></div>
<div class="thumb" style="left:18px;top:438px;width:406px;height:15px"></div>
<div class="grip" style="left:218px;top:442px;width:1px;height:6px"></div><div class="grip" style="left:220px;top:442px;width:1px;height:6px"></div><div class="grip" style="left:222px;top:442px;width:1px;height:6px"></div><div class="grip" style="left:224px;top:442px;width:1px;height:6px"></div>
<div class="sbtn" style="left:466px;top:438px;height:14px"><svg class="abs" style="left:4px;top:0px" width="7" height="11"><path d="M1.5 1.5 L5.5 5.5 L1.5 9.5" fill="none" stroke="#4d6185" stroke-width="2.4"/></svg></div>
</div>
<div class="abs" style="left:4px;top:506px;width:704px;height:2px;background:linear-gradient(180deg,#b0b2aa,#dcdacd)"></div>
<div class="abs" style="left:5px;top:511px;line-height:17px;transform:scaleX(1.0113);transform-origin:0 0;">Deletes the selection.</div>
<div class="abs" style="left:705px;top:517px;width:2px;height:2px;background:#b8b4a2;box-shadow:1px 1px 0 #fff"></div>
<div class="abs" style="left:705px;top:521px;width:2px;height:2px;background:#b8b4a2;box-shadow:1px 1px 0 #fff"></div>
<div class="abs" style="left:701px;top:521px;width:2px;height:2px;background:#b8b4a2;box-shadow:1px 1px 0 #fff"></div>
<div class="abs" style="left:705px;top:525px;width:2px;height:2px;background:#b8b4a2;box-shadow:1px 1px 0 #fff"></div>
<div class="abs" style="left:701px;top:525px;width:2px;height:2px;background:#b8b4a2;box-shadow:1px 1px 0 #fff"></div>
<div class="abs" style="left:697px;top:525px;width:2px;height:2px;background:#b8b4a2;box-shadow:1px 1px 0 #fff"></div>
<div class="abs" style="left:35px;top:252px;width:171px;height:3px;background:linear-gradient(180deg,rgba(0,0,0,.38),rgba(0,0,0,.22) 1px,rgba(0,0,0,.08))"></div>
<div class="abs" style="left:204px;top:53px;width:3px;height:199px;background:linear-gradient(90deg,rgba(0,0,0,.38),rgba(0,0,0,.22) 1px,rgba(0,0,0,.08))"></div>
<div class="abs" style="left:32px;top:49px;width:172px;height:203px;background:#fff;border:1px solid #aca899">
<div class="mrow" style="left:18px;top:2px;color:#000;transform:scaleX(1.0306);transform-origin:0 0;"><b style="display:inline-block;transform:scaleX(1.06);transform-origin:0 0">Modify</b></div>
<div class="mrow" style="left:18px;top:19px;color:#000;">Modify Binary Data</div>
<div class="mrow" style="left:18px;top:45px;color:#000;">New</div>
<svg class="abs" style="left:158px;top:49px" width="5" height="8"><path d="M0 0 L4 3.5 L0 7 Z" fill="#000"/></svg>
<div class="mrow" style="left:18px;top:71px;color:#000;">Permissions...</div>
<div class="abs" style="left:2px;top:97px;width:166px;height:17px;background:#316ac5"></div>
<div class="mrow" style="left:18px;top:97px;color:#fff;transform:scaleX(1.0147);transform-origin:0 0;">Delete</div>
<div class="mrow" style="left:117px;top:97px;width:50px;color:#fff;transform:scaleX(0.9703);transform-origin:0 0;">Del</div>
<div class="mrow" style="left:18px;top:114px;color:#000;transform:scaleX(0.9713);transform-origin:0 0;">Rename</div>
<div class="mrow" style="left:18px;top:140px;color:#000;transform:scaleX(0.9731);transform-origin:0 0;">Copy Key Name</div>
<div class="mrow" style="left:18px;top:166px;color:#000;transform:scaleX(1.0500);transform-origin:0 0;">Find...</div>
<div class="mrow" style="left:117px;top:166px;width:50px;color:#000;transform:scaleX(1.0331);transform-origin:0 0;">Ctrl+F</div>
<div class="mrow" style="left:18px;top:183px;color:#000;transform:scaleX(0.9872);transform-origin:0 0;">Find Next</div>
<div class="mrow" style="left:117px;top:183px;width:50px;color:#000;transform:scaleX(0.9316);transform-origin:0 0;">F3</div>
<div class="msep" style="top:39px"></div>
<div class="msep" style="top:65px"></div>
<div class="msep" style="top:91px"></div>
<div class="msep" style="top:134px"></div>
<div class="msep" style="top:160px"></div>
</div>
<svg class="abs" style="left:0;top:0" width="713" height="533">
<ellipse cx="47" cy="38.6" rx="17.6" ry="8.9" fill="none" stroke="#000" stroke-width="3.6"/>
<path d="M262 394.5 H674 Q701 394.5 701 404 Q701 413 674 413 H262 Q229 413 229 404 Q229 394.5 262 394.5 Z" fill="none" stroke="#000" stroke-width="3"/>
<path d="M60 147.5 H178 Q203 147.5 203 155.5 Q203 164 178 164 H60 Q34 164 34 155.5 Q34 147.5 60 147.5 Z" fill="none" stroke="#000" stroke-width="3"/>
</svg>
</div></body></html>
